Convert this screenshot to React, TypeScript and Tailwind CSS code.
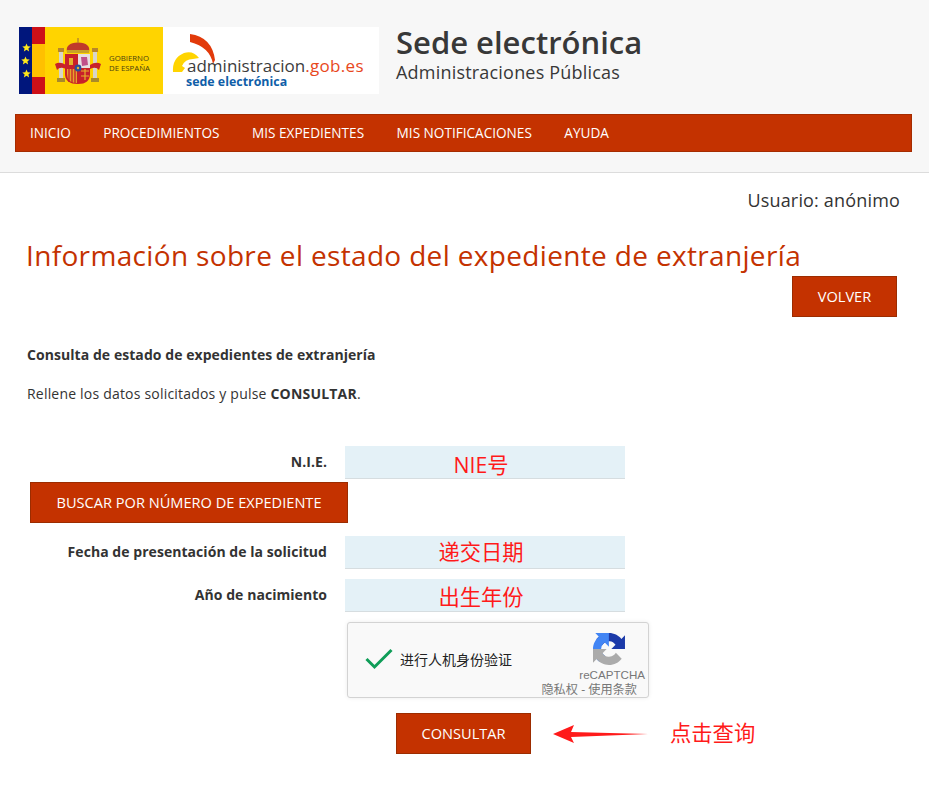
import React from "react";

function Shield() {
  return (
    <svg width="46" height="46" viewBox="0 0 46 46" className="shrink-0">
      {/* pillars */}
      <rect x="4" y="13" width="4" height="28" fill="#d8d4c8" />
      <rect x="3" y="10" width="6" height="4" fill="#b8862a" />
      <rect x="2" y="40" width="8" height="4" fill="#a98a2a" />
      <rect x="38" y="13" width="4" height="28" fill="#d8d4c8" />
      <rect x="37" y="10" width="6" height="4" fill="#b8862a" />
      <rect x="36" y="40" width="8" height="4" fill="#a98a2a" />
      {/* ribbons */}
      <path d="M0 26 Q5 23 11 27 L11 31 Q5 28 2 32 Z" fill="#c8202a" />
      <path d="M46 26 Q41 23 35 27 L35 31 Q41 28 44 32 Z" fill="#c8202a" />
      {/* crown */}
      <path d="M12 14 Q10 5 23 4.5 Q36 5 34 14 Z" fill="#c0392b" />
      <rect x="12" y="12" width="22" height="3" fill="#c9a227" />
      <rect x="22.3" y="0" width="1.4" height="5" fill="#b8862a" />
      {/* shield */}
      <path d="M10 16 H23 V46 Q10 46 10 36 Z" fill="#c8202a" />
      <path d="M23 16 H35 V30 H23 Z" fill="#e8dfe0" />
      <path d="M23 30 H35 V36 Q35 46 23 46 Z" fill="#c8202a" />
      <path d="M12 31 H22 V45 Q12 45 12 36 Z" fill="#e5a32a" />
      <path d="M14 31V44M17 31V45M20 31V45" stroke="#c8202a" strokeWidth="1.3" />
      <rect x="14" y="20" width="4" height="7" fill="#e5b12a" />
      <path d="M26 19 L32 19 L33 27 L27 28 Z" fill="#c0508a" />
      <path d="M26 33 H34 M30 31 V42 M26 38 H34" stroke="#e5b12a" strokeWidth="1.2" />
      <circle cx="23" cy="30" r="3.4" fill="#2b4f9a" />
      <circle cx="23" cy="30" r="1.2" fill="#e5b12a" />
    </svg>
  );
}

function Star({ className }: { className: string }) {
  return (
    <svg viewBox="0 0 24 24" width="9" height="9" className={className} fill="#ffe81a">
      <path d="M12 1l3.2 7.6 8 .7-6.1 5.3 1.9 8L12 18.3 5 22.6l1.9-8L.8 9.3l8-.7z" />
    </svg>
  );
}

function GobiernoLogo() {
  return (
    <div className="flex h-[67px] w-[144px] bg-[#ffd400]">
      <div className="flex w-[13px] flex-col items-center justify-center gap-[4px] bg-[#00167c]">
        <Star className="ml-[1px]" />
        <Star className="-ml-[1px]" />
        <Star className="ml-[1px]" />
      </div>
      <div className="flex w-[13px] flex-col">
        <div className="h-[17px] bg-[#cd1018]" />
        <div className="flex-1 bg-[#ffc000]" />
        <div className="h-[17px] bg-[#cd1018]" />
      </div>
      <div className="flex flex-1 items-center pl-[10px]">
        <Shield />
        <div className="ml-[8px] pt-[4px] text-[7.8px] leading-[10px] font-medium text-[#4a3f10] [font-family:'Open_Sans',sans-serif]">
          <div>GOBIERNO</div>
          <div>DE ESPAÑA</div>
        </div>
      </div>
    </div>
  );
}

function AdminLogo() {
  return (
    <div className="relative h-[67px] w-[216px] bg-white">
      <svg width="44" height="40" viewBox="0 0 44 40" className="absolute top-[7px] left-[9px]">
        <path d="M1 38 Q0 24 12 19 Q21 16 27 24 L21 25 Q13 25 10 32 L13 34 L10 38 Z" fill="#ffd400" />
        <path d="M18 0 Q40 3 43 26 L41 30 Q38 13 18 8 Z" fill="#e23a0a" />
      </svg>
      <div className="absolute top-[31px] left-[24px] text-[17px] leading-[16px] whitespace-nowrap [font-family:'Open_Sans',sans-serif]">
        <span className="text-[#3c3c3c]">administracion</span>
        <span className="font-medium tracking-[0.3px] text-[#e8481c]">.gob.es</span>
      </div>
      <div className="absolute top-[47px] left-[23px] text-[12.4px] leading-[15px] font-bold whitespace-nowrap text-[#0f5ea8] [font-family:'Open_Sans',sans-serif]">
        sede electrónica
      </div>
    </div>
  );
}

function Recaptcha() {
  return (
    <svg width="32" height="32" viewBox="0 0 64 64">
      <path d="M64 31.955l-.033-1.37V4.687l-7.16 7.16C50.948 4.674 42.033.093 32.05.093c-10.4 0-19.622 4.96-25.458 12.64l11.736 11.86a15.55 15.55 0 0 1 4.754-5.334c2.05-1.6 4.952-2.906 8.968-2.906.485 0 .86.057 1.135.163 4.976.393 9.288 3.14 11.828 7.124l-8.307 8.307c10.522-.04 22.4-.066 27.295.005" fill="#1c3aa9" />
      <path d="M31.862.094l-1.37.033H4.594l7.16 7.16C4.58 13.147 0 22.06 0 32.046c0 10.4 4.96 19.622 12.64 25.458L24.5 45.768a15.55 15.55 0 0 1-5.334-4.754c-1.6-2.05-2.906-4.952-2.906-8.968 0-.485.057-.86.163-1.135.393-4.976 3.14-9.288 7.124-11.828l8.307 8.307c-.04-10.522-.066-22.4.005-27.295" fill="#4285f4" />
      <path d="M.001 32.045l.033 1.37v25.898l7.16-7.16c5.86 7.173 14.774 11.754 24.76 11.754 10.4 0 19.622-4.96 25.458-12.64l-11.736-11.86a15.55 15.55 0 0 1-4.754 5.334c-2.05 1.6-4.952 2.906-8.968 2.906-.485 0-.86-.057-1.135-.163-4.976-.393-9.288-3.14-11.828-7.124l8.307-8.307c-10.522.04-22.4.066-27.295-.005" fill="#ababab" />
    </svg>
  );
}

const navItems = ["INICIO", "PROCEDIMIENTOS", "MIS EXPEDIENTES", "MIS NOTIFICACIONES", "AYUDA"];

function Field({ label, value, valueClass = "" }: { label: string; value: string; valueClass?: string }) {
  return (
    <div className="flex items-center">
      <div className="w-[327px] pb-[2px] text-right text-[14px] font-bold tracking-[0.05px] text-[#333]">{label}</div>
      <div className={`ml-[18px] flex h-[33px] w-[280px] items-center justify-center border-b border-[#d6dde0] bg-[#e4f1f7] pr-[8px] text-[21.3px] leading-none text-[#ff1a1a] ${valueClass}`}>
        {value}
      </div>
    </div>
  );
}

function RedButton({ children, className }: { children: React.ReactNode; className: string }) {
  return (
    <button className={`h-[41px] border border-[#9c2c00] bg-[#c43200] text-[14.6px] text-white ${className}`}>
      {children}
    </button>
  );
}

export default function App() {
  return (
    <div className="min-h-[785px] bg-white text-[#333] [font-family:'Open_Sans','Noto_Sans_CJK_SC',sans-serif]">
      <header className="h-[173px] border-b border-[#dcdcdc] bg-[#f7f7f7] px-[15px] pt-[27px]">
        <div className="flex h-[67px] pl-[4px]">
          <GobiernoLogo />
          <AdminLogo />
          <div className="ml-[17px]">
            <div className="mt-[-2px] text-[31px] leading-[34px] font-semibold text-[#383838]">Sede electrónica</div>
            <div className="text-[18px] leading-[26px] tracking-[0.2px] text-[#383838]">Administraciones Públicas</div>
          </div>
        </div>
        <nav className="mt-[20px] flex h-[38px] w-[897px] items-center gap-[32.5px] border border-[#a52c00] bg-[#c43200] pl-[14px] text-[13.6px] text-white">
          {navItems.map((item) => (
            <span key={item}>{item}</span>
          ))}
        </nav>
      </header>

      <main className="px-[27px]">
        <div className="pt-[14px] pr-[2px] text-right text-[18px] leading-[26px] tracking-[0.17px] text-[#333]">Usuario: anónimo</div>
        <h1 className="mt-[23px] -ml-[1px] text-[28px] leading-[38px] tracking-[0.34px] text-[#c43200]">
          Información sobre el estado del expediente de extranjería
        </h1>
        <div className="flex justify-end pr-[5px]">
          <RedButton className="mt-[2px] w-[105px]">VOLVER</RedButton>
        </div>

        <p className="mt-[28px] text-[14px] leading-[20px] font-bold tracking-[0.06px]">Consulta de estado de expedientes de extranjería</p>
        <p className="mt-[19px] text-[14px] leading-[20px] tracking-[0.2px]">
          Rellene los datos solicitados y pulse <b>CONSULTAR</b>.
        </p>

        <div className="mt-[42px] -ml-[27px] flex flex-col">
          <Field label="N.I.E." value="NIE号" valueClass="pt-[5px]" />
          <RedButton className="mt-[3px] ml-[30px] w-[318px]">BUSCAR POR NÚMERO DE EXPEDIENTE</RedButton>
          <div className="mt-[13px]">
            <Field label="Fecha de presentación de la solicitud" value="递交日期" />
          </div>
          <div className="mt-[10px]">
            <Field label="Año de nacimiento" value="出生年份" valueClass="pt-[3px]" />
          </div>

          <div className="relative mt-[10px] ml-[347px] h-[76px] w-[302px] rounded-[3px] border border-[#d3d3d3] bg-[#f9f9f9] shadow-[0_0_4px_rgba(0,0,0,0.08)]">
            <div className="flex h-full items-center pb-[2px] pl-[17px]">
              <svg width="28" height="22" viewBox="0 0 28 22" fill="none">
                <path d="M1.5 11 L9.5 19 L26.5 2" stroke="#0f9d58" strokeWidth="3" />
              </svg>
              <span className="ml-[7px] text-[14px] text-[#222]">进行人机身份验证</span>
            </div>
            <div className="absolute top-[10px] right-[23px] leading-none">
              <Recaptcha />
            </div>
            <div className="absolute top-[44px] right-[3px] text-[11.6px] leading-[15px] text-[#777] [font-family:'Liberation_Sans',sans-serif]">reCAPTCHA</div>
            <div className="absolute top-[59px] right-[11px] text-[12.2px] leading-[16px] text-[#777]">隐私权 - 使用条款</div>
          </div>

          <div className="mt-[15px] ml-[396px] flex items-center">
            <RedButton className="w-[135px]">CONSULTAR</RedButton>
            <svg width="96" height="20" viewBox="0 0 96 20" className="ml-[22px]">
              <path d="M0 10 L21 1 L18 8 L95 10 L18 13 L21 19 Z" fill="#ff1a1a" />
            </svg>
            <span className="ml-[21px] pb-[2px] text-[21.3px] text-[#ff1a1a]">点击查询</span>
          </div>
        </div>
      </main>
    </div>
  );
}
